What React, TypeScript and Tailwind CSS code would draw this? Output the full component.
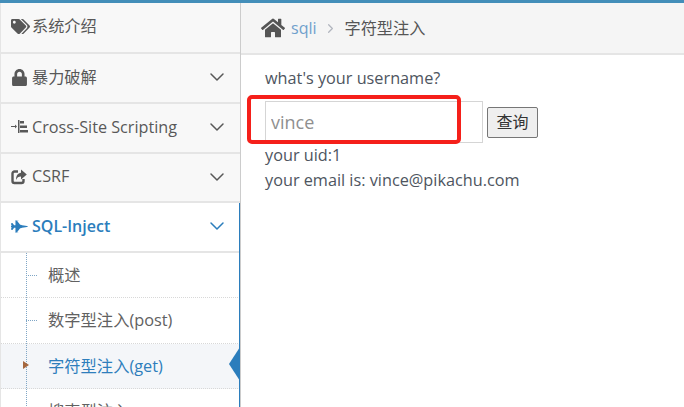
import { FaFighterJet, FaHome, FaLock, FaTags } from "react-icons/fa";
import { ChevronDown, ChevronRight } from "lucide-react";

const font = "font-['Open_Sans','Noto_Sans_CJK_SC',sans-serif]";

function ListIcon() {
  return (
    <svg width="18" height="16" viewBox="0 0 18 16" className="fill-[#585858]">
      <rect x="0" y="7" width="5" height="1" />
      <path d="M4 5.5 L6 7.5 L4 9.5 Z" />
      <rect x="7" y="1" width="1.5" height="13" />
      <rect x="9" y="2" width="4" height="2.5" />
      <rect x="9" y="6.5" width="7" height="2.5" />
      <rect x="9" y="11" width="8" height="2.5" />
    </svg>
  );
}

function ShareIcon() {
  return (
    <svg width="16" height="16" viewBox="0 0 16 16" className="fill-[#585858]">
      <path d="M7 2.5 H3.5 A2 2 0 0 0 1.5 4.5 V12 A2 2 0 0 0 3.5 14 H10.5 A2 2 0 0 0 12.5 12 V10" fill="none" stroke="#585858" strokeWidth="2.4" />
      <path d="M10 0.5 L15.8 5.5 L10 10.5 V7.5 C7.5 7.5 6 8.5 5 11 C5 6.5 7 4 10 3.7 Z" />
    </svg>
  );
}

function MenuRow({ icon, label, arrow = true, height = "h-[50px]" }: { icon: React.ReactNode; label: string; arrow?: boolean; height?: string }) {
  return (
    <div className={`${height} shrink-0 flex items-center pl-[10px] pr-[11px] pb-[2px] border-b-2 border-[#e5e5e5] bg-[#f8f8f8] text-[#585858]`}>
      <span className="w-[21px] flex items-center shrink-0">{icon}</span>
      <span className="flex-1 text-[16.2px]">{label}</span>
      {arrow && <ChevronDown size={24} strokeWidth={1.5} className="text-[#585858]" />}
    </div>
  );
}

function SubRow({ label, active, height = "h-[45px]" }: { label: string; active?: boolean; height?: string }) {
  return (
    <div
      className={`relative ${height} shrink-0 flex items-center pl-[47px] text-[16.3px] border-b border-dotted border-[#d8d8d8] ${
        active ? "bg-[#f4f6f9] text-[#2e7ebc]" : "bg-white text-[#616161]"
      }`}
    >
      {active ? (
        <span className="absolute left-[22px] top-[17px] z-10 border-y-[4px] border-l-[6px] border-y-transparent border-l-[#a5673f]" />
      ) : (
        <span className="absolute left-[25px] top-[22px] w-[11px] border-t border-dotted border-[#7fa6c6]" />
      )}
      {label}
      {active && (
        <span className="absolute right-0 top-[3px] border-y-[17px] border-r-[11px] border-y-transparent border-r-[#2b7dbc]" />
      )}
    </div>
  );
}

export default function App() {
  return (
    <div className={`${font} w-[684px] h-[407px] overflow-hidden bg-white flex flex-col`}>
      <div className="h-[3px] shrink-0 bg-[#438eb9]" />
      <div className="flex flex-1 min-h-0">
        <aside className="w-[241px] shrink-0 flex flex-col border-r border-[#cccccc] border-l border-l-[#e5e5e5] overflow-hidden">
          <MenuRow icon={<FaTags size={19} />} label="系统介绍" arrow={false} height="h-[51px]" />
          <MenuRow icon={<FaLock size={17} />} label="暴力破解" />
          <MenuRow icon={<ListIcon />} label="Cross-Site Scripting" />
          <MenuRow icon={<ShareIcon />} label="CSRF" height="h-[49px]" />
          <div className="relative flex flex-col">
            <div className="h-[50px] shrink-0 flex items-center pl-[10px] pr-[11px] pb-[2px] border-b-2 border-[#e5e5e5] bg-white text-[#2b7dbc]">
              <span className="w-[21px] flex items-center shrink-0">
                <FaFighterJet size={17} />
              </span>
              <span className="flex-1 text-[16px] font-semibold">SQL-Inject</span>
              <ChevronDown size={24} strokeWidth={1.5} />
            </div>
            <SubRow label="概述" />
            <SubRow label="数字型注入(post)" height="h-[46px]" />
            <SubRow label="字符型注入(get)" active />
            <SubRow label="搜索型注入" />
            <span className="absolute left-[25px] top-[50px] bottom-0 border-l border-dotted border-[#7fa6c6]" />
            <span className="absolute right-[-1px] top-0 bottom-0 w-[2px] bg-[#2b7dbc]" />
          </div>
        </aside>
        <main className="flex-1 min-w-0 flex flex-col">
          <div className="h-[52px] shrink-0 flex items-center pl-[20px] bg-[#f5f5f5] border-b-2 border-[#e5e5e5]">
            <FaHome size={24} className="text-[#555555]" />
            <span className="ml-[6px] text-[16px] text-[#6fa0cc]">sqli</span>
            <ChevronRight size={15} className="ml-[6px] text-[#b2b6bf]" />
            <span className="ml-[7px] text-[16.2px] text-[#555555]">字符型注入</span>
          </div>
          <div className="pl-[24px] pt-[11px] text-[16.25px] leading-[24px] text-[#4e5560]">
            <p className="h-[24px]">what's your username?</p>
            <div className="relative flex items-center mt-[11px] h-[42px]">
              <input
                readOnly
                placeholder="vince"
                className="w-[218px] h-[42px] pl-[5px] border border-[#d5d5d5] bg-white text-[18px] outline-none placeholder:text-[#8f8f8f]"
              />
              <button className="ml-[4px] w-[51px] h-[31px] border border-[#767676] rounded-[2px] bg-[#efefef] text-[16px] text-[#333333]">
                查询
              </button>
              <span className="absolute left-[-18px] top-[-6px] w-[214px] h-[49px] border-[4px] border-[#f5201a] rounded-[5px]" />
            </div>
            <p className="mt-0">your uid:1</p>
            <p className="mt-[1px]">your email is: vince@pikachu.com</p>
          </div>
        </main>
      </div>
    </div>
  );
}
